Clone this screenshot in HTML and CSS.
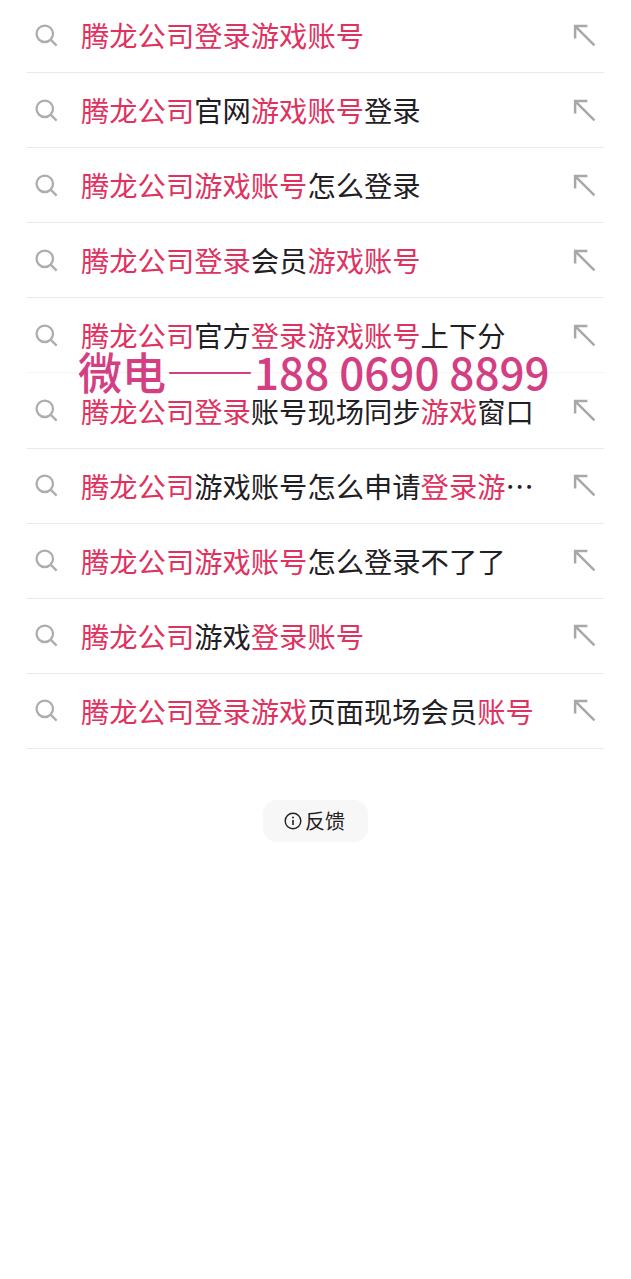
FILE: index.html
```html
<!DOCTYPE html>
<html lang="zh-CN">
<head>
    <meta charset="UTF-8">
    <meta name="viewport" content="width=device-width, initial-scale=1.0">
    <title>搜索建议</title>
    <link rel="stylesheet" href="styles.css">
</head>
<body>
    <svg class="icon-defs" width="0" height="0">
        <symbol id="search" viewBox="0 0 24 24">
            <circle cx="10.2" cy="10.2" r="8.6" fill="none" stroke="currentColor" stroke-width="2.4"/>
            <path d="M16.6 16.6 L22.6 22.6" fill="none" stroke="currentColor" stroke-width="2.4"/>
        </symbol>
        <symbol id="fill" viewBox="0 0 24 24">
            <path d="M2.2 15 V2.2 H15 M2.2 2.2 L22.4 22.4" fill="none" stroke="currentColor" stroke-width="2.6"/>
        </symbol>
    </svg>

    <ul class="suggest-list">
        <li class="suggest-row">
            <svg class="icon-search"><use href="#search"/></svg>
            <span class="suggest-text"><em>腾龙公司登录游戏账号</em></span>
            <svg class="icon-fill"><use href="#fill"/></svg>
        </li>
        <li class="suggest-row">
            <svg class="icon-search"><use href="#search"/></svg>
            <span class="suggest-text"><em>腾龙公司</em>官网<em>游戏账号</em>登录</span>
            <svg class="icon-fill"><use href="#fill"/></svg>
        </li>
        <li class="suggest-row">
            <svg class="icon-search"><use href="#search"/></svg>
            <span class="suggest-text"><em>腾龙公司游戏账号</em>怎么登录</span>
            <svg class="icon-fill"><use href="#fill"/></svg>
        </li>
        <li class="suggest-row">
            <svg class="icon-search"><use href="#search"/></svg>
            <span class="suggest-text"><em>腾龙公司登录</em>会员<em>游戏账号</em></span>
            <svg class="icon-fill"><use href="#fill"/></svg>
        </li>
        <li class="suggest-row no-line">
            <svg class="icon-search"><use href="#search"/></svg>
            <span class="suggest-text"><em>腾龙公司</em>官方<em>登录游戏账号</em>上下分</span>
            <svg class="icon-fill"><use href="#fill"/></svg>
        </li>
        <li class="suggest-row">
            <svg class="icon-search"><use href="#search"/></svg>
            <span class="suggest-text"><em>腾龙公司登录</em>账号现场同步<em>游戏</em>窗口</span>
            <svg class="icon-fill"><use href="#fill"/></svg>
        </li>
        <li class="suggest-row">
            <svg class="icon-search"><use href="#search"/></svg>
            <span class="suggest-text"><em>腾龙公司</em>游戏账号怎么申请<em>登录游戏账号</em></span>
            <svg class="icon-fill"><use href="#fill"/></svg>
        </li>
        <li class="suggest-row">
            <svg class="icon-search"><use href="#search"/></svg>
            <span class="suggest-text"><em>腾龙公司游戏账号</em>怎么登录不了了</span>
            <svg class="icon-fill"><use href="#fill"/></svg>
        </li>
        <li class="suggest-row">
            <svg class="icon-search"><use href="#search"/></svg>
            <span class="suggest-text"><em>腾龙公司</em>游戏<em>登录账号</em></span>
            <svg class="icon-fill"><use href="#fill"/></svg>
        </li>
        <li class="suggest-row">
            <svg class="icon-search"><use href="#search"/></svg>
            <span class="suggest-text"><em>腾龙公司登录游戏</em>页面现场会员<em>账号</em></span>
            <svg class="icon-fill"><use href="#fill"/></svg>
        </li>
    </ul>

    <div class="watermark">微电——188 0690 8899</div>

    <div class="feedback-wrap">
        <button class="feedback-btn">
            <svg class="icon-info" viewBox="0 0 18 18">
                <circle cx="9" cy="9" r="7.8" fill="none" stroke="currentColor" stroke-width="1.4"/>
                <circle cx="9" cy="5.6" r="1" fill="currentColor"/>
                <path d="M9 8 V13" fill="none" stroke="currentColor" stroke-width="1.6"/>
            </svg>
            反馈
        </button>
    </div>
</body>
</html>
```

FILE: styles.css
```css
html, body {
    margin: 0;
    padding: 0;
    background-color: #fff;
}
body {
    position: relative;
    min-height: 1279px;
    font-family: "Noto Sans CJK SC", "Noto Sans", sans-serif;
    color: #1f2024;
    overflow: hidden;
}
.icon-defs {
    position: absolute;
}
.suggest-list {
    list-style: none;
    margin: -2px 27px 0;
    padding: 0;
}
.suggest-row {
    display: flex;
    align-items: center;
    box-sizing: border-box;
    height: 75.1px;
    border-bottom: 1px solid #e9e9ea;
}
.suggest-row.no-line {
    border-bottom-color: #f4f4f4;
}
.icon-search {
    flex: none;
    width: 23px;
    height: 23px;
    margin-left: 8px;
    color: #adadad;
}
.suggest-text {
    flex: none;
    width: 460px;
    margin-left: 23px;
    font-size: 28.3px;
    line-height: 40px;
    white-space: nowrap;
    overflow: hidden;
    text-overflow: ellipsis;
}
.suggest-text em {
    font-style: normal;
    color: #e0325f;
}
.icon-fill {
    flex: none;
    width: 23px;
    height: 23px;
    margin-left: 32px;
    color: #a8a8a8;
}
.watermark {
    position: absolute;
    left: 78px;
    top: 341px;
    font-size: 44px;
    line-height: 60px;
    font-weight: 500;
    color: #d43f84;
    white-space: nowrap;
}
.feedback-wrap {
    display: flex;
    justify-content: center;
    margin-top: 51px;
}
.feedback-btn {
    display: flex;
    align-items: center;
    gap: 3px;
    box-sizing: border-box;
    width: 105px;
    height: 42px;
    padding: 0 0 0 21px;
    border: none;
    border-radius: 14px;
    background-color: #f7f7f7;
    color: #1f2024;
    font-family: inherit;
    font-size: 20px;
}
.icon-info {
    width: 18px;
    height: 18px;
}
```
